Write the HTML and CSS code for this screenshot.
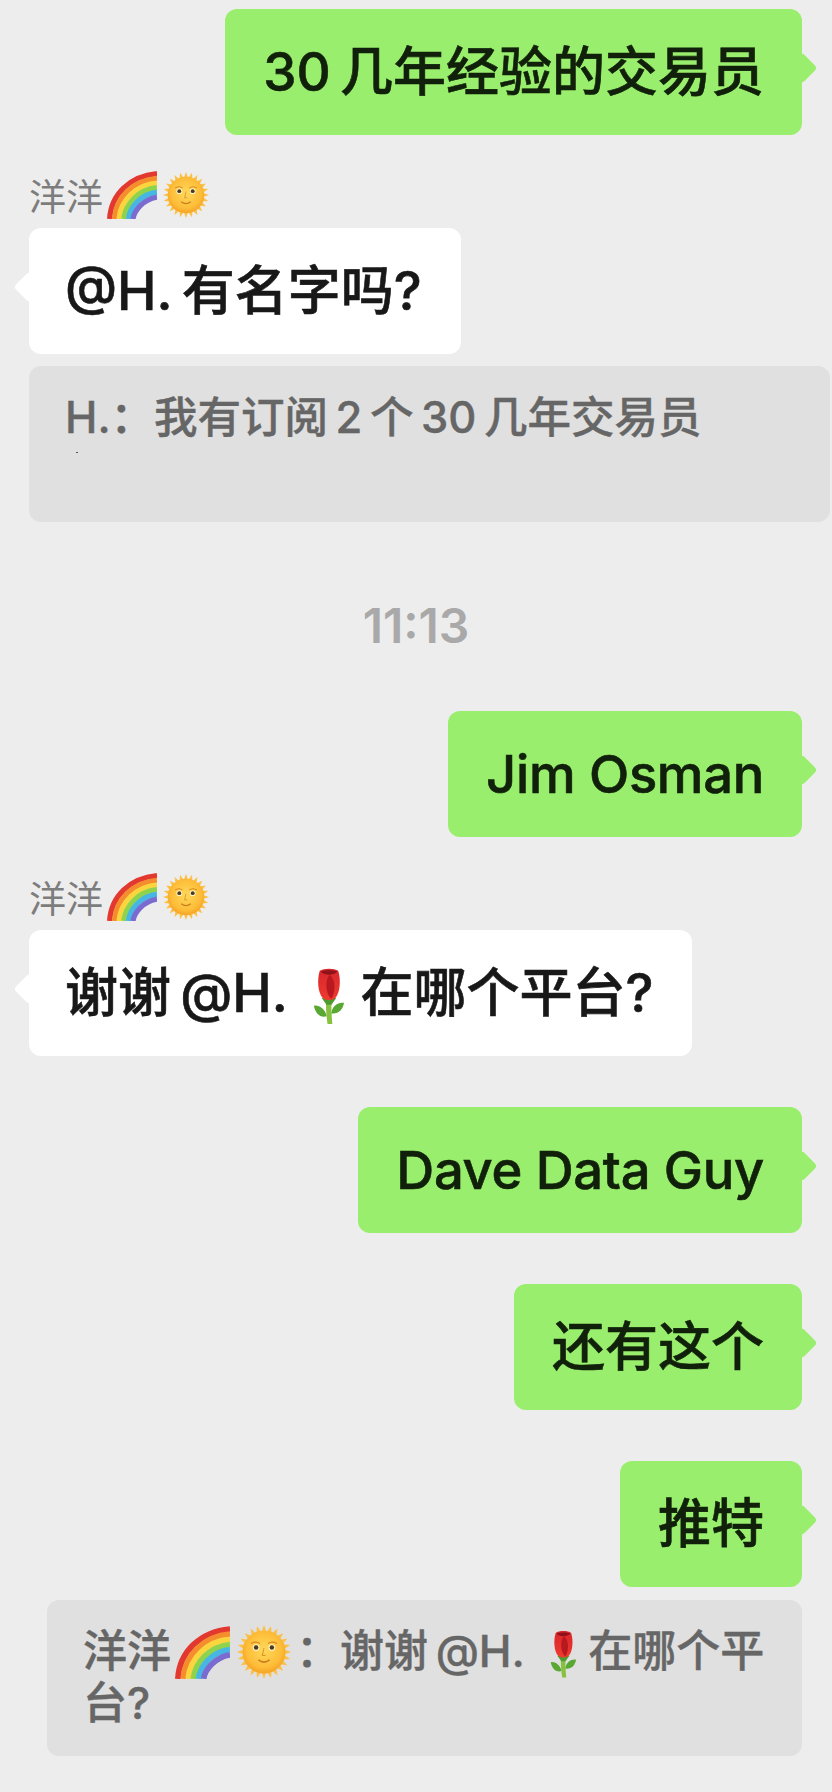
FILE: index.html
```html
<!DOCTYPE html>
<html lang="zh-CN">
<head>
    <meta charset="UTF-8">
    <meta name="viewport" content="width=device-width, initial-scale=1.0">
    <title>聊天记录</title>
    <link rel="stylesheet" href="styles.css">
</head>
<body>
    <svg class="defs" width="0" height="0" aria-hidden="true">
        <defs>
            <radialGradient id="sunFace" cx="50%" cy="45%" r="55%">
                <stop offset="0" stop-color="#ffd95c"/>
                <stop offset="0.75" stop-color="#fdbd38"/>
                <stop offset="1" stop-color="#f6a326"/>
            </radialGradient>
            <linearGradient id="roseHead" x1="0" y1="0" x2="0" y2="1">
                <stop offset="0" stop-color="#d8262c"/>
                <stop offset="1" stop-color="#ee3a2e"/>
            </linearGradient>
            <symbol id="rainbow" viewBox="0 0 48 46">
                <g fill="none" stroke-width="5">
                    <path stroke="#e2382f" d="M2.500 46C4 22 22 5 48 2.500"/>
                    <path stroke="#f58d2e" d="M7 46C9 25 25 9 48 7"/>
                    <path stroke="#fad53e" d="M11.500 46C13 28 28 13 48 11.500"/>
                    <path stroke="#8fd34c" d="M16 46C18 31 30 18 48 16"/>
                    <path stroke="#46b6e2" d="M20.500 46C22 34 33 22 48 20.500"/>
                    <path stroke="#7a6bd0" d="M25 46C26 38 35 27 48 25"/>
                </g>
            </symbol>
            <symbol id="sun" viewBox="0 0 48 48">
                <g fill="#fbc046">
                    <path id="ray" d="M21.800 6L24 0L26.200 6Z"/>
                    <use href="#ray" transform="rotate(15 24 24)"/>
                    <use href="#ray" transform="rotate(30 24 24)"/>
                    <use href="#ray" transform="rotate(45 24 24)"/>
                    <use href="#ray" transform="rotate(60 24 24)"/>
                    <use href="#ray" transform="rotate(75 24 24)"/>
                    <use href="#ray" transform="rotate(90 24 24)"/>
                    <use href="#ray" transform="rotate(105 24 24)"/>
                    <use href="#ray" transform="rotate(120 24 24)"/>
                    <use href="#ray" transform="rotate(135 24 24)"/>
                    <use href="#ray" transform="rotate(150 24 24)"/>
                    <use href="#ray" transform="rotate(165 24 24)"/>
                    <use href="#ray" transform="rotate(180 24 24)"/>
                    <use href="#ray" transform="rotate(195 24 24)"/>
                    <use href="#ray" transform="rotate(210 24 24)"/>
                    <use href="#ray" transform="rotate(225 24 24)"/>
                    <use href="#ray" transform="rotate(240 24 24)"/>
                    <use href="#ray" transform="rotate(255 24 24)"/>
                    <use href="#ray" transform="rotate(270 24 24)"/>
                    <use href="#ray" transform="rotate(285 24 24)"/>
                    <use href="#ray" transform="rotate(300 24 24)"/>
                    <use href="#ray" transform="rotate(315 24 24)"/>
                    <use href="#ray" transform="rotate(330 24 24)"/>
                    <use href="#ray" transform="rotate(345 24 24)"/>
                </g>
                <circle cx="24" cy="24" r="19" fill="url(#sunFace)"/>
                <circle cx="17" cy="20" r="3" fill="#fff3c4"/>
                <circle cx="31" cy="20" r="3" fill="#fff3c4"/>
                <circle cx="17" cy="20" r="2" fill="#4a3a20"/>
                <circle cx="31" cy="20" r="2" fill="#4a3a20"/>
                <path d="M12.500 16.500Q17 14 20.500 16.500M27.500 16.500Q31 14 35.500 16.500" fill="none" stroke="#d98a1e" stroke-width="1"/>
                <path d="M24 20.500L22.500 27H25.500" fill="none" stroke="#e09a28" stroke-width="1"/>
                <path d="M19 31Q24 35 29 31" fill="none" stroke="#c97e1c" stroke-width="1.300"/>
            </symbol>
            <symbol id="rose" viewBox="0 0 32 58">
                <path d="M13.500 28C13 38 13.500 48 15 58H20C19 48 18.500 38 19.500 28Z" fill="#86c13f"/>
                <path d="M14 49C12 42 6 38 1 39C2 46 7 52 14 50Z" fill="#58a833"/>
                <path d="M19 46C20 39 26 35 32 36C31 43 26 48 19 47Z" fill="#58a833"/>
                <path d="M9 31H24L19 38H14Z" fill="#4c9a30"/>
                <path d="M7 3C11 0 22 0 26 3C29 12 28 26 23 31C19 34 14 34 10 31C5 26 4 12 7 3Z" fill="url(#roseHead)"/>
                <path d="M17 7C23 11 24 23 19 32C13 27 12 13 17 7Z" fill="#b8181f"/>
                <path d="M8 4C12 2 21 2 25 4C21 8 12 8 8 4Z" fill="#8e1219"/>
            </symbol>
        </defs>
    </svg>

    <main class="chat">
        <div class="bubble sent first">30&thinsp;几年经验的交易员</div>

        <div class="name">洋洋<svg class="rainbow"><use href="#rainbow"/></svg><svg class="sunny"><use href="#sun"/></svg></div>
        <div class="bubble received">@H.&thinsp;有名字吗?</div>
        <div class="quote quote-wide">H.：我有订阅&thinsp;2&thinsp;个&thinsp;30&thinsp;几年交易员</div>

        <div class="time">11:13</div>

        <div class="bubble sent latin after-time">Jim Osman</div>

        <div class="name">洋洋<svg class="rainbow"><use href="#rainbow"/></svg><svg class="sunny"><use href="#sun"/></svg></div>
        <div class="bubble received">谢谢&thinsp;@H. <svg class="rose"><use href="#rose"/></svg>在哪个平台?</div>

        <div class="bubble sent latin">Dave Data Guy</div>
        <div class="bubble sent">还有这个</div>
        <div class="bubble sent">推特</div>

        <div class="quote quote-small">洋洋<svg class="rainbow-big"><use href="#rainbow"/></svg><svg class="sunny-big"><use href="#sun"/></svg>：谢谢&thinsp;@H. <svg class="rose-small"><use href="#rose"/></svg>在哪个平<br>台?</div>
    </main>
</body>
</html>
```

FILE: styles.css
```css
body {
    margin: 0;
    padding: 0;
    background-color: #ededed;
    font-family: Inter, "Noto Sans CJK SC", sans-serif;
}

.defs {
    display: block;
    height: 0;
}

.chat {
    display: flex;
    flex-direction: column;
    align-items: flex-start;
    height: 1792px;
    box-sizing: border-box;
    padding-top: 9px;
    overflow: hidden;
}

.bubble {
    position: relative;
    box-sizing: border-box;
    height: 126px;
    line-height: 126px;
    padding: 0 38px;
    border-radius: 12px;
    font-size: 53px;
    font-weight: 500;
    -webkit-text-stroke: 0.6px currentColor;
    white-space: nowrap;
    color: #181818;
}

.bubble::after {
    content: "";
    position: absolute;
    top: 48px;
    width: 22px;
    height: 22px;
    border-radius: 4px;
    background-color: inherit;
    transform: rotate(45deg);
}

.sent {
    align-self: flex-end;
    margin-top: 51px;
    margin-right: 30px;
    background-color: #9aee6d;
    color: #10200a;
}

.sent::after {
    right: -11px;
}

.sent.first {
    margin-top: 0;
}

.sent.after-time {
    margin-top: 54px;
}

.latin {
    font-size: 52.500px;
    letter-spacing: -0.3px;
}

.received {
    margin-left: 29px;
    padding: 0 39px 0 36px;
    background-color: #ffffff;
}

.received::after {
    left: -11px;
}

.name {
    display: flex;
    align-items: center;
    height: 50px;
    margin-top: 35px;
    margin-bottom: 8px;
    margin-left: 29px;
    font-size: 37px;
    color: #7d7d7d;
}

.rainbow {
    width: 50px;
    height: 48px;
    margin-left: 4px;
}

.sunny {
    width: 46px;
    height: 46px;
    margin-left: 6px;
}

.quote {
    position: relative;
    box-sizing: border-box;
    padding: 27px 36px 0;
    border-radius: 12px;
    background-color: #e0e0e0;
    font-size: 44px;
    font-weight: 500;
    -webkit-text-stroke: 0.4px currentColor;
    line-height: 48px;
    color: #666666;
}

.quote-wide {
    width: 801px;
    height: 156px;
    margin-top: 12px;
    margin-left: 29px;
    font-size: 43.500px;
}

.quote-wide::after {
    content: "";
    position: absolute;
    left: 47px;
    top: 86px;
    width: 2px;
    height: 1px;
    background-color: #555555;
}

.quote-small {
    width: 755px;
    height: 156px;
    margin-top: 13px;
    margin-left: 47px;
    padding-top: 25px;
    white-space: nowrap;
}

.time {
    align-self: center;
    height: 62px;
    margin-top: 73px;
    font-size: 48px;
    font-weight: 600;
    line-height: 62px;
    color: #a9a9a9;
}

.rose {
    width: 31px;
    height: 60px;
    margin-left: 12px;
    margin-right: 16px;
    vertical-align: -14px;
}

.rainbow-big {
    width: 55px;
    height: 53px;
    margin-left: 4px;
    vertical-align: -12px;
}

.sunny-big {
    width: 54px;
    height: 54px;
    margin-left: 7px;
    margin-right: 5px;
    vertical-align: -12px;
}

.rose-small {
    width: 26px;
    height: 50px;
    margin-left: 14px;
    margin-right: 12px;
    vertical-align: -12px;
}
```
